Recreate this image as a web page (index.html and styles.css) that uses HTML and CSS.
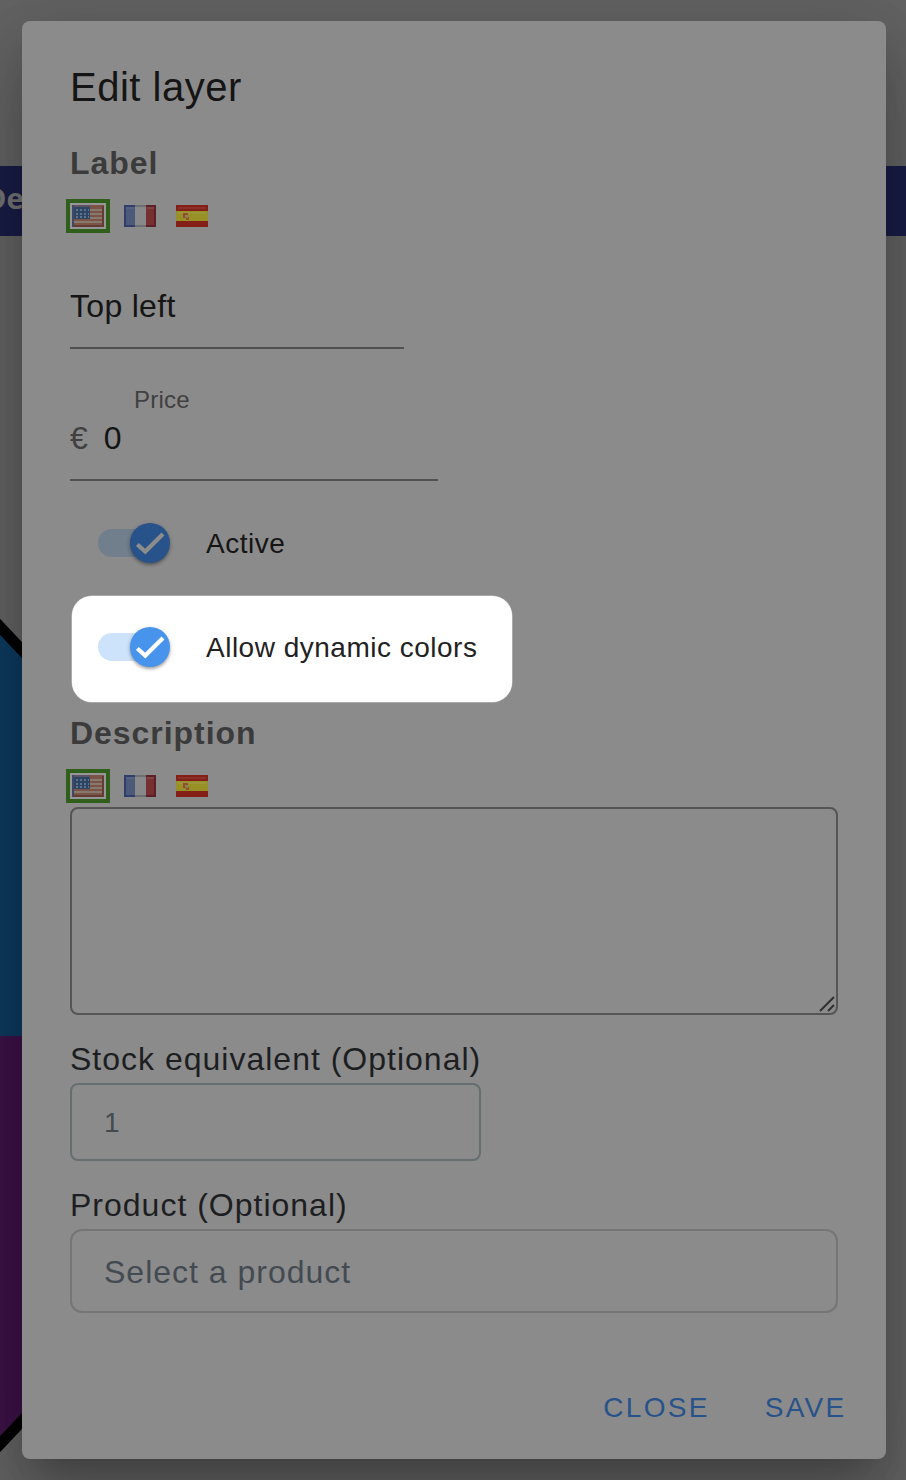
FILE: index.html
```html
<!DOCTYPE html>
<html lang="en">
<head>
<meta charset="utf-8">
<title>Edit layer</title>
<link rel="stylesheet" href="styles.css">
</head>
<body>
<svg class="defs" aria-hidden="true">
  <symbol id="us" viewBox="0 0 32 22" preserveAspectRatio="none">
    <rect width="32" height="22" fill="#7b5347"/>
    <path d="M2 5h28M2 9h28M2 13h28M2 17h28" stroke="#88796f" stroke-width="1.8"/>
    <path d="M0 21h32M31 1v20" stroke="#633c34" stroke-width="2"/>
    <path d="M0 1h18" stroke="#5b5265" stroke-width="2"/>
    <rect y="2" width="18" height="12" fill="#2e4463"/>
    <path d="M4 5h13M4 9h13M4 12h13" stroke="#5c738a" stroke-width="2" stroke-dasharray="2 2"/>
    <path d="M1 0v22" stroke="#3f4866" stroke-width="2"/>
  </symbol>
  <symbol id="fr" viewBox="0 0 32 22" preserveAspectRatio="none">
    <rect width="11" height="22" fill="#4c5978"/>
    <rect x="11" width="11" height="22" fill="#88898a"/>
    <rect x="22" width="10" height="22" fill="#763031"/>
    <path d="M2 3h8" stroke="#566280" stroke-width="2"/>
    <path d="M23 3h7" stroke="#814442" stroke-width="2"/>
    <path d="M1 0v22M0 21h11M0 1h11" stroke="#303e6d" stroke-width="2"/>
    <path d="M31 0v22M22 21h10M22 1h10" stroke="#5b2028" stroke-width="2"/>
    <path d="M11 1h11M11 21h11" stroke="#6c6e72" stroke-width="2"/>
  </symbol>
  <symbol id="es" viewBox="0 0 32 22" preserveAspectRatio="none">
    <rect width="32" height="22" fill="#841f18"/>
    <path d="M2 3h28" stroke="#8b3029" stroke-width="2"/>
    <rect y="6" width="32" height="10" fill="#969026"/>
    <path d="M2 8h28" stroke="#9b963a" stroke-width="2"/>
    <path d="M7 8h5v2H9v2h4v3h-3v-2H7z" fill="#91502b"/>
    <path d="M10 10h2v3h-2z" fill="#897e68"/>
  </symbol>
  <symbol id="check" viewBox="0 0 40 40">
    <path d="M7.3 21.5 15.3 28.6 33 11" fill="none" stroke="currentColor" stroke-width="4.2"/>
  </symbol>
</svg>

<div class="backdrop">
  <div class="bar"><span class="bar-text">De</span></div>
  <svg class="artwork" viewBox="0 0 40 880">
    <path d="M0 30 40 76V436H0z" fill="#0d3a5f"/>
    <path d="M0 436h40v360L0 844z" fill="#3d1247"/>
    <path d="M-10 16 50 80M-10 855 50 791" stroke="#000" stroke-width="11"/>
  </svg>
</div>

<main class="dialog">
  <h1 class="title">Edit layer</h1>
  <h2 class="heading">Label</h2>
  <div class="flags">
    <svg class="flag selected"><use href="#us"/></svg>
    <svg class="flag"><use href="#fr"/></svg>
    <svg class="flag"><use href="#es"/></svg>
  </div>
  <div class="text-field">Top left</div>
  <div class="price">
    <div class="price-label">Price</div>
    <div class="price-row"><span class="currency">€</span><span>0</span></div>
  </div>
  <div class="option">
    <span class="switch"><span class="thumb"><svg class="check"><use href="#check"/></svg></span></span>
    <span class="option-label">Active</span>
  </div>
  <div class="option spotlight">
    <span class="switch"><span class="thumb"><svg class="check"><use href="#check"/></svg></span></span>
    <span class="option-label">Allow dynamic colors</span>
  </div>
  <h2 class="heading description">Description</h2>
  <div class="flags">
    <svg class="flag selected"><use href="#us"/></svg>
    <svg class="flag"><use href="#fr"/></svg>
    <svg class="flag"><use href="#es"/></svg>
  </div>
  <div class="textarea">
    <svg class="grip" viewBox="0 0 16 16"><path d="M1 15 15 1M9 15l6-6" stroke="#303030" stroke-width="2"/></svg>
  </div>
  <div class="label">Stock equivalent (Optional)</div>
  <div class="input stock">1</div>
  <div class="label product-label">Product (Optional)</div>
  <div class="input product">Select a product</div>
  <div class="actions"><span>CLOSE</span><span>SAVE</span></div>
</main>
</body>
</html>
```

FILE: styles.css
```css
* { box-sizing: border-box; }

body {
  margin: 0;
  width: 906px;
  height: 1480px;
  overflow: hidden;
  position: relative;
  padding: 21px 20px 21px 22px;
  background: #636363;
  font-family: "Liberation Sans", Arial, sans-serif;
  color: #151515;
}

.defs { position: absolute; width: 0; height: 0; }

.backdrop {
  position: absolute;
  inset: 0;
  padding-top: 166px;
}

.bar {
  height: 70px;
  background: #191d46;
  overflow: hidden;
}

.bar-text {
  display: block;
  margin-left: -15px;
  font: 700 29px/63px "Open Sans", sans-serif;
  color: #747474;
}

.artwork { display: block; width: 40px; height: 880px; margin-top: 364px; }

.dialog {
  position: relative;
  width: 864px;
  height: 1438px;
  padding: 41px 48px 0;
  border-radius: 8px;
  background: #8b8b8b;
  box-shadow: 0 22px 30px -14px rgba(0, 0, 0, .2),
    0 48px 76px 6px rgba(0, 0, 0, .14),
    0 18px 92px 16px rgba(0, 0, 0, .12);
}

.title {
  margin: 0;
  font-size: 40px;
  font-weight: 400;
  line-height: 50px;
  letter-spacing: .5px;
}

.heading {
  margin: 31px 0 0;
  font-size: 32px;
  line-height: 40px;
  letter-spacing: .95px;
  color: #3b3b3b;
}

.flags { display: flex; gap: 20px; margin: 22px 0 0 2px; }
.flag { display: block; width: 32px; height: 22px; }
.selected { box-shadow: 0 0 0 2px #969696, 0 0 0 6px #305f1c; }

.text-field {
  width: 334px;
  height: 70px;
  margin-top: 52px;
  border-bottom: 2px solid #505050;
  font-size: 32px;
  line-height: 54px;
  letter-spacing: .3px;
}

.price {
  width: 368px;
  height: 96px;
  margin-top: 36px;
  border-bottom: 2px solid #505050;
}

.price-label {
  padding-left: 64px;
  font-size: 24px;
  line-height: 30px;
  letter-spacing: .2px;
  color: #404040;
}

.price-row {
  display: flex;
  gap: 16px;
  font-size: 32px;
  line-height: 46px;
}

.currency { color: #404040; }

.option {
  display: flex;
  align-items: center;
  width: 440px;
  height: 104px;
  margin: 10px 0 0 2px;
  padding-left: 26px;
}

.option-label {
  margin-left: 36px;
  padding-top: 2px;
  font-size: 28px;
  line-height: 36px;
  letter-spacing: .5px;
  white-space: nowrap;
}

.spotlight {
  height: 106px;
  margin-top: 1px;
  padding-bottom: 4px;
  border-radius: 20px;
  background: #fff;
  box-shadow: 0 0 0 .5px #ccc;
  color: #222;
}

.switch {
  display: flex;
  width: 72px;
  height: 28px;
  align-items: center;
  justify-content: flex-end;
  border-radius: 14px;
  background: linear-gradient(90deg, #717e8b 54px, transparent 54px);
}

.thumb {
  width: 40px;
  height: 40px;
  flex: none;
  border-radius: 50%;
  background: #28528a;
  color: #8c8c8c;
  box-shadow: 0 2px 3px rgba(0, 0, 0, .28), 0 1px 5px rgba(0, 0, 0, .14);
}

.check { display: block; width: 40px; height: 40px; }
.spotlight .switch { background: linear-gradient(90deg, #cde3fb 54px, transparent 54px); }
.spotlight .thumb { background: #4894ed; color: #fff; }

.description { margin-top: 11px; }

.textarea {
  display: flex;
  align-items: flex-end;
  justify-content: flex-end;
  height: 208px;
  margin-top: 10px;
  border: 2px solid #555;
  border-radius: 8px;
}

.grip { width: 16px; height: 16px; margin: 0 1px 1px 0; }

.label {
  margin-top: 24px;
  font-size: 32px;
  line-height: 40px;
  letter-spacing: 1px;
  color: #1d1e21;
}

.input {
  border: 2px solid #666e70;
  border-radius: 8px;
  padding-left: 32px;
  color: #434a51;
}

.stock {
  width: 411px;
  height: 78px;
  margin-top: 4px;
  font-size: 28px;
  line-height: 76px;
}

.product-label { margin-top: 24px; }

.product {
  height: 84px;
  margin-top: 4px;
  border-color: #757575;
  border-radius: 12px;
  font-size: 32px;
  line-height: 82px;
  letter-spacing: 1px;
}

.actions {
  display: flex;
  justify-content: flex-end;
  gap: 55px;
  margin: 75px -8.5px 0 0;
  font-size: 28px;
  line-height: 40px;
  letter-spacing: 2.3px;
  color: #28528a;
}
```
